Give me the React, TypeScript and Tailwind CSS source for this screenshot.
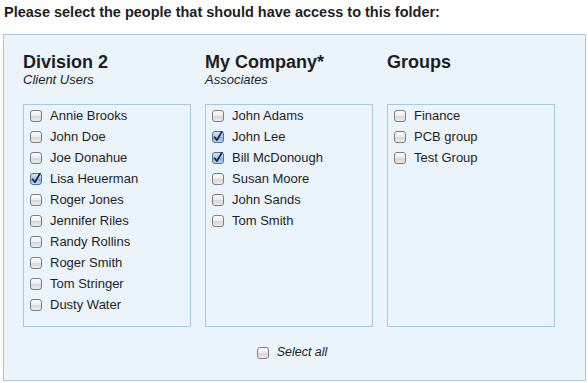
import React from "react";

const font = { fontFamily: '"Liberation Sans", Arial, Helvetica, sans-serif' };

function Box({ checked }: { checked?: boolean }) {
  return (
    <svg width="12" height="12" viewBox="0 0 12 12" className="shrink-0">
      <defs>
        <linearGradient id="ug" x1="0" y1="0" x2="0" y2="1">
          <stop offset="0" stopColor="#fdfdfd" />
          <stop offset="0.5" stopColor="#ececec" />
          <stop offset="0.55" stopColor="#d6d6d6" />
          <stop offset="1" stopColor="#f0f0f0" />
        </linearGradient>
        <linearGradient id="cg" x1="0" y1="0" x2="0" y2="1">
          <stop offset="0" stopColor="#dbe9f8" />
          <stop offset="0.5" stopColor="#a9c9ee" />
          <stop offset="0.55" stopColor="#82aee6" />
          <stop offset="1" stopColor="#c7def7" />
        </linearGradient>
      </defs>
      <rect x="0.5" y="0.5" width="11" height="11" rx="2.5" fill={checked ? "url(#cg)" : "url(#ug)"} stroke={checked ? "#566f92" : "#7d7d7d"} />
      {checked && (
        <path d="M2.6 6.2 L4.9 9.2 L9.8 0.8" fill="none" stroke="#1c2a44" strokeWidth="1.7" strokeLinecap="round" strokeLinejoin="round" />
      )}
    </svg>
  );
}

function Row({ name, checked }: { name: string; checked?: boolean }) {
  return (
    <label className="flex items-center h-[21px] gap-[8px] text-[13px] text-[#1e1e1e]">
      <Box checked={checked} />
      <span>{name}</span>
    </label>
  );
}

type Col = { title: string; sub?: string; items: [string, boolean?][] };

const cols: Col[] = [
  {
    title: "Division 2",
    sub: "Client Users",
    items: [
      ["Annie Brooks"],
      ["John Doe"],
      ["Joe Donahue"],
      ["Lisa Heuerman", true],
      ["Roger Jones"],
      ["Jennifer Riles"],
      ["Randy Rollins"],
      ["Roger Smith"],
      ["Tom Stringer"],
      ["Dusty Water"],
    ],
  },
  {
    title: "My Company*",
    sub: "Associates",
    items: [
      ["John Adams"],
      ["John Lee", true],
      ["Bill McDonough", true],
      ["Susan Moore"],
      ["John Sands"],
      ["Tom Smith"],
    ],
  },
  {
    title: "Groups",
    items: [["Finance"], ["PCB group"], ["Test Group"]],
  },
];

export default function App() {
  return (
    <div className="w-[588px] h-[383px] bg-white text-[#1e1e1e]" style={font}>
      <div className="pt-[2px] pl-[4px] text-[14.5px] leading-[20px] font-bold">
        Please select the people that should have access to this folder:
      </div>
      <div className="mt-[12px] ml-[3px] w-[583px] h-[347px] border border-[#a6c9e0] bg-[#ebf4fa] pt-[17px] pl-[19px]">
        <div className="flex gap-[14px]">
          {cols.map((c) => (
            <div key={c.title} className="w-[168px] flex flex-col">
              <div className="text-[18px] leading-[20px] font-bold">{c.title}</div>
              <div className="text-[13px] leading-[16px] italic h-[16px]">{c.sub}</div>
              <div className="mt-[16px] h-[223px] border border-[#a6c9e0] pl-[6px]">
                {c.items.map(([n, ch]) => (
                  <Row key={n} name={n} checked={ch} />
                ))}
              </div>
            </div>
          ))}
        </div>
        <div className="flex justify-center pr-[24px] mt-[15px]">
          <label className="flex items-center h-[21px] gap-[8px] text-[12.5px] italic">
            <Box />
            <span>Select all</span>
          </label>
        </div>
      </div>
    </div>
  );
}
